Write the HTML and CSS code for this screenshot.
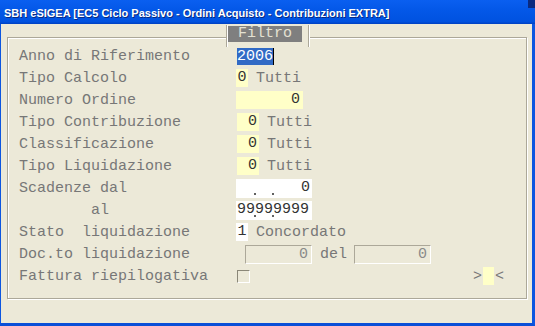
FILE: index.html
```html
<!DOCTYPE html>
<html lang="it">
<head>
  <meta charset="UTF-8" />
  <title>SBH eSIGEA - Contribuzioni EXTRA</title>
  <link rel="stylesheet" href="styles.css">
</head>
<body>

  <div class="window">
    <div class="titlebar">
      <span class="title">SBH eSIGEA [EC5 Ciclo Passivo - Ordini Acquisto - Contribuzioni EXTRA]</span>
      <span class="corner"></span>
    </div>

    <div class="client">
      <div class="frame">
        <div class="tab"><span class="legend">Filtro</span></div>

        <div class="row">
          <span class="label">Anno di Riferimento</span>
          <span class="sel">2006</span>
        </div>
        <div class="row">
          <span class="label">Tipo Calcolo</span>
          <span class="fld yellow small">0</span>
          <span class="desc">Tutti</span>
        </div>
        <div class="row">
          <span class="label">Numero Ordine</span>
          <span class="fld yellow num">0</span>
        </div>
        <div class="row">
          <span class="label">Tipo Contribuzione</span>
          <span class="fld yellow code">0</span>
          <span class="desc">Tutti</span>
        </div>
        <div class="row">
          <span class="label">Classificazione</span>
          <span class="fld yellow code">0</span>
          <span class="desc">Tutti</span>
        </div>
        <div class="row">
          <span class="label">Tipo Liquidazione</span>
          <span class="fld yellow code">0</span>
          <span class="desc">Tutti</span>
        </div>
        <div class="row">
          <span class="label">Scadenze dal</span>
          <span class="fld white date right">0</span>
        </div>
        <div class="row">
          <span class="label">        al</span>
          <span class="fld white date">99999999</span>
        </div>
        <div class="row">
          <span class="label">Stato  liquidazione</span>
          <span class="fld white small">1</span>
          <span class="desc">Concordato</span>
        </div>
        <div class="row">
          <span class="label">Doc.to liquidazione</span>
          <span class="fld off doc">0</span>
          <span class="del">del</span>
          <span class="fld off docdate">0</span>
        </div>
        <div class="row">
          <span class="label">Fattura riepilogativa</span>
          <span class="check"></span>
          <span class="arrows">&gt;<span class="fld yellow pick"></span>&lt;</span>
        </div>
      </div>
    </div>
  </div>

</body>
</html>
```

FILE: styles.css
```css
html, body {
  margin: 0;
  padding: 0;
}

body {
  font-family: "Liberation Mono", "Courier New", monospace;
  font-size: 15px;
  background: #ece9d8;
}

.window {
  width: 535px;
  height: 326px;
  display: flex;
  flex-direction: column;
}

.titlebar {
  height: 24px;
  box-sizing: border-box;
  display: flex;
  align-items: center;
  padding: 2px 0 0 4px;
  background: linear-gradient(#0a5ff0, #0458e8 40%, #0052e0 90%, #0040c0);
  color: #fff;
}

.title {
  font-family: "Liberation Sans", Arial, sans-serif;
  font-weight: bold;
  font-size: 11px;
  text-shadow: 1px 1px #0a2a80;
  white-space: nowrap;
}

.corner {
  margin-left: auto;
  align-self: flex-start;
  margin-top: -2px;
  width: 7px;
  height: 8px;
  background: #0a2a80;
}

.client {
  flex: 1;
  border-left: 1px solid #0c56e0;
  border-right: 3px solid #0c56e0;
  border-bottom: 3px solid #0a4fd8;
  padding: 13px 5px 0 6px;
}

.frame {
  position: relative;
  height: 262px;
  box-sizing: border-box;
  border: 1px solid #aca899;
  box-shadow: inset 1px 1px #fff, 1px 1px #fff;
  padding: 7px 0 0 11px;
}

.tab {
  position: absolute;
  left: 218px;
  top: -13px;
  width: 80px;
  height: 21px;
  box-sizing: content-box;
  padding: 1px 0 0 1px;
  background: #ece9d8;
  border-left: 1px solid #aca899;
  border-right: 1px solid #aca899;
  box-shadow: inset 1px 0 #fff, 1px 0 #fff;
}

.legend {
  display: block;
  width: 74px;
  height: 16px;
  line-height: 16px;
  background: #7f7f7f;
  color: #e4e1d2;
  text-align: center;
}

.row {
  display: flex;
  align-items: center;
  height: 22px;
}

.label {
  width: 217px;
  flex: none;
  color: #777;
  white-space: pre;
}

.desc {
  margin-left: 8px;
  color: #777;
}

.sel {
  margin-left: 1px;
  height: 17px;
  line-height: 17px;
  background: #316ac5;
  color: #fff;
  border-right: 1px solid #000;
}

.fld {
  display: block;
  height: 18px;
  line-height: 18px;
  box-sizing: border-box;
  color: #333;
  white-space: pre;
}

.yellow {
  background: #ffffc8;
}

.white {
  background: #fff;
}

.small {
  width: 12px;
  text-align: center;
}

.num {
  width: 67px;
  text-align: right;
  padding-right: 3px;
}

.code {
  margin-left: 1px;
  width: 22px;
  text-align: right;
  padding-right: 2px;
}

.date {
  position: relative;
  width: 76px;
  height: 19px;
  padding-left: 1px;
}

.date.right {
  text-align: right;
  padding-right: 2px;
}

.date::before, .date::after {
  content: "";
  position: absolute;
  bottom: 3px;
  width: 2px;
  height: 2px;
  background: #606060;
}

.date::before {
  left: 18px;
}

.date::after {
  left: 36px;
}

.off {
  height: 19px;
  line-height: 17px;
  border: 1px solid;
  border-color: #aca899 #fff #fff #aca899;
  color: #8a8a8a;
  text-align: right;
  padding-right: 3px;
}

.doc {
  margin-left: 9px;
  width: 67px;
}

.del {
  margin: 0 7px 0 8px;
  color: #777;
}

.docdate {
  width: 77px;
}

.check {
  margin-left: 1px;
  width: 13px;
  height: 13px;
  box-sizing: border-box;
  border: 1px solid;
  border-color: #8a8778 #fff #fff #8a8778;
}

.arrows {
  margin-left: auto;
  margin-right: 22px;
  display: flex;
  align-items: center;
  color: #777;
}

.pick {
  width: 11px;
  margin: 0 1px;
}
```
